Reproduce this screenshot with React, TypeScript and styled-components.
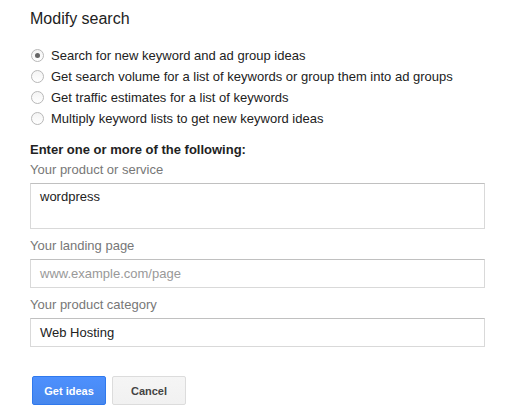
import React from 'react';
import styled, { createGlobalStyle } from 'styled-components';

interface IRadioProps {
  checked?: boolean;
}

interface IFieldProps {
  tall?: boolean;
}

interface IButtonProps {
  primary?: boolean;
}

const GlobalStyle = createGlobalStyle`
  body {
    margin: 0;
    background: #fff;
    font-family: Arial, 'Liberation Sans', sans-serif;
    color: #222;
  }
`;

const Panel = styled.div`
  padding: 9px 0 0 30px;
  width: 455px;
`;

const Title = styled.h2`
  margin: 0;
  font-size: 16px;
  line-height: 20px;
  font-weight: normal;
  color: #222;
`;

const OptionList = styled.ul`
  margin: 16px 0 0;
  padding: 0;
  list-style: none;
`;

const Option = styled.li`
  display: flex;
  align-items: center;
  height: 21px;
  font-size: 13px;
  color: #222;
`;

const Radio = styled.span<IRadioProps>`
  position: relative;
  width: 11px;
  height: 11px;
  margin: 0 7px 0 1px;
  border: 1px solid #b8b8b8;
  border-radius: 50%;
  background: linear-gradient(#f4f4f4, #fff);
  box-sizing: content-box;
  &::after {
    content: '';
    display: ${(props) => (props.checked ? 'block' : 'none')};
    position: absolute;
    left: 3px;
    top: 3px;
    width: 5px;
    height: 5px;
    border-radius: 50%;
    background: #666;
  }
`;

const Heading = styled.div`
  margin-top: 13px;
  font-size: 13px;
  line-height: 16px;
  font-weight: bold;
  color: #222;
`;

const Label = styled.div`
  margin: 9px 0 5px;
  font-size: 13px;
  line-height: 16px;
  color: #777;
`;

const FirstLabel = styled(Label)`
  margin-top: 4px;
`;

const Field = styled.div<IFieldProps>`
  box-sizing: border-box;
  height: ${(props) => (props.tall ? '46px' : '29px')};
  padding: ${(props) => (props.tall ? '5px 9px' : '0 9px')};
  display: flex;
  align-items: ${(props) => (props.tall ? 'flex-start' : 'center')};
  border: 1px solid #d9d9d9;
  border-top-color: #c0c0c0;
  font-size: 13px;
  line-height: 16px;
  color: #222;
`;

const Placeholder = styled.span`
  color: #999;
`;

const Actions = styled.div`
  display: flex;
  gap: 6px;
  margin: 29px 0 0 2px;
`;

const Button = styled.button<IButtonProps>`
  box-sizing: border-box;
  width: 74px;
  height: 29px;
  padding: 0;
  border-radius: 2px;
  font-family: Arial, 'Liberation Sans', sans-serif;
  font-size: 11px;
  font-weight: bold;
  border: 1px solid ${(props) => (props.primary ? '#3079ed' : '#dcdcdc')};
  background: ${(props) =>
    props.primary
      ? 'linear-gradient(#4d90fe, #4787ed)'
      : 'linear-gradient(#f5f5f5, #f1f1f1)'};
  color: ${(props) => (props.primary ? '#fff' : '#444')};
`;

const options = [
  'Search for new keyword and ad group ideas',
  'Get search volume for a list of keywords or group them into ad groups',
  'Get traffic estimates for a list of keywords',
  'Multiply keyword lists to get new keyword ideas',
];

export default function App() {
  return (
    <Panel>
      <GlobalStyle />
      <Title>Modify search</Title>
      <OptionList>
        {options.map((text, i) => (
          <Option key={text}>
            <Radio checked={i === 0} />
            {text}
          </Option>
        ))}
      </OptionList>
      <Heading>Enter one or more of the following:</Heading>
      <FirstLabel>Your product or service</FirstLabel>
      <Field tall>wordpress</Field>
      <Label>Your landing page</Label>
      <Field>
        <Placeholder>www.example.com/page</Placeholder>
      </Field>
      <Label>Your product category</Label>
      <Field>Web Hosting</Field>
      <Actions>
        <Button primary>Get ideas</Button>
        <Button>Cancel</Button>
      </Actions>
    </Panel>
  );
}
